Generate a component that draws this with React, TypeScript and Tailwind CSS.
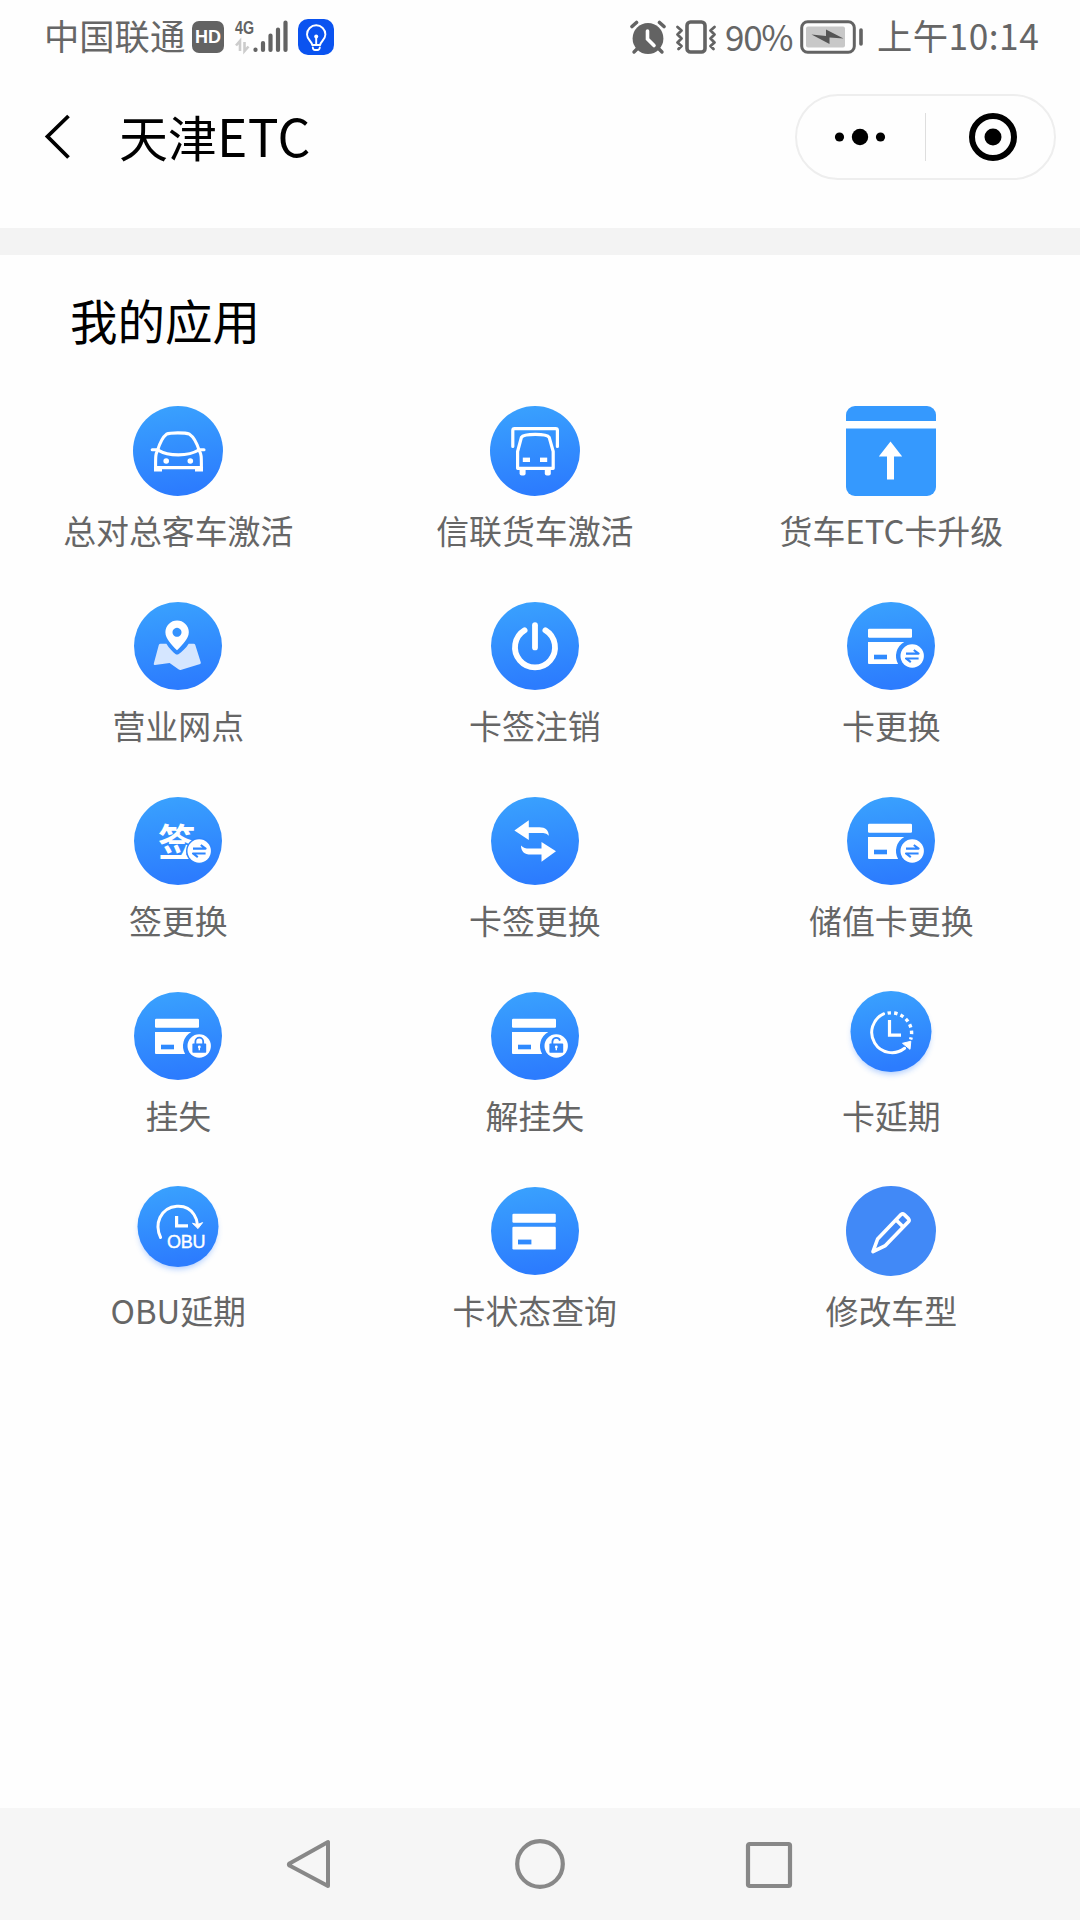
import type { ReactNode } from "react";

const CJK = "font-['Noto_Sans_CJK_SC',sans-serif]";

/* ---------- icon building blocks, all drawn in a 90x90 box ---------- */

const Disc = ({ children, small, r = 44 }: { children: ReactNode; small?: boolean; r?: number }) => (
  <svg viewBox="0 0 90 90" className="w-[90px] h-[90px] overflow-visible" fill="none">
    <defs>
      <linearGradient id="disc" x1="0" y1="0" x2="0.15" y2="1">
        <stop offset="0" stopColor="#3aa3fe" />
        <stop offset="1" stopColor="#2c7cfe" />
      </linearGradient>
      <filter id="glow" x="-20%" y="-20%" width="140%" height="150%">
        <feGaussianBlur stdDeviation="3" />
      </filter>
    </defs>
    {small && <circle cx="45" cy="44.5" r="38.5" fill="#2c7cfe" opacity="0.4" filter="url(#glow)" />}
    {small ? (
      <circle cx="45" cy="40.5" r="40.5" fill="url(#disc)" />
    ) : (
      <circle cx="45" cy="45" r={r} fill="url(#disc)" />
    )}
    {children}
  </svg>
);

const CardShape = () => (
  <>
    <rect x="22" y="27.7" width="44" height="9" rx="1.2" fill="#fff" />
    <path d="M22 41H58.3A16 16 0 0 0 52.1 63H23a1 1 0 0 1-1-1z" fill="#fff" />
    <rect x="28" y="53.7" width="13" height="4.6" fill="#2f8afe" />
  </>
);

const SwapBadge = () => (
  <>
    <circle cx="66.2" cy="55" r="11.7" fill="#fff" />
    <path
      d="M60 52.6H72.6L67.8 49M72.6 57.5H60L64.8 61.1"
      stroke="#2f86fe"
      strokeWidth="2.1"
      strokeLinejoin="round"
    />
  </>
);

const LockBadge = ({ open }: { open?: boolean }) => (
  <>
    <circle cx="66.2" cy="55" r="11.7" fill="#fff" />
    <rect x="59.4" y="52.6" width="13.8" height="9.2" rx="0.8" fill="#2f86fe" />
    <path
      d={open ? "M62.4 53V50.6a3.9 3.9 0 0 1 7.6-1" : "M62.4 53V50.6a3.9 3.9 0 0 1 7.8 0V53"}
      stroke="#2f86fe"
      strokeWidth="1.8"
    />
    <path d="M66.3 55.4v3.8" stroke="#fff" strokeWidth="1.4" />
    <circle cx="66.3" cy="56" r="1.4" fill="#fff" />
  </>
);

/* ---------- app icons ---------- */

const CarIcon = () => (
  <Disc r={45}>
    <g stroke="#fff" strokeWidth="3.1" strokeLinejoin="round" strokeLinecap="round">
      <path d="M24.5 44.5C26.5 38 29 31.5 33.5 28.2C37 26.4 52.5 26.4 56.5 28.2C61.5 31.5 64.2 38 66.2 44.5" />
      <path d="M19.2 43.8H24.5C36 50.6 55 50.6 66.2 43.8H71" />
      <path d="M24.5 44.5C22.4 48.5 22.6 50.5 22.6 63.4M66.2 44.5C68.5 48.5 68.4 50.5 68.4 63.4" />
      <path d="M22.6 61.6H68.4" />
    </g>
    <path d="M21 61h8v4.4h-8zM62 61h8v4.4h-8z" fill="#fff" />
    <circle cx="33.2" cy="55" r="2.8" fill="#fff" />
    <circle cx="57.3" cy="55" r="2.8" fill="#fff" />
  </Disc>
);

const TruckIcon = () => (
  <Disc r={45}>
    <path
      d="M22.8 40.5V24.4q0-1.8 1.8-1.8H65.6q1.8 0 1.8 1.8V40.5"
      stroke="#fff"
      strokeWidth="3.2"
      strokeLinecap="round"
    />
    <path
      d="M27.6 62.3V45.5L31.4 31.4C34 27.4 56.6 27.4 59.2 31.4L63.2 45.5V62.3z"
      stroke="#fff"
      strokeWidth="3.2"
      strokeLinejoin="round"
    />
    <rect x="32.8" y="51.6" width="7.2" height="4.4" fill="#fff" />
    <rect x="50" y="51.6" width="7.2" height="4.4" fill="#fff" />
    <rect x="29.6" y="62" width="6" height="7.4" rx="2" fill="#fff" />
    <rect x="54.8" y="62" width="6" height="7.4" rx="2" fill="#fff" />
  </Disc>
);

const UpgradeIcon = () => (
  <svg viewBox="0 0 90 90" className="w-[90px] h-[90px]">
    <rect width="90" height="90" rx="9" fill="#3599fe" />
    <path d="M0 15H90V22.4H0z" fill="#fff" />
    <path d="M44.5 35.6L56.2 50.4H48V73.4H41V50.4H32.8z" fill="#fff" />
  </svg>
);

const MapIcon = () => (
  <Disc>
    <path
      d="M27.5 42.8H33.4C36 47.5 40 51 42.4 52.9Q44 54 45.8 52.9C48.5 51 53 47.5 55.7 42.8H60.6Q61.9 42.8 62.3 44L67.8 61.6Q68 62.6 67.2 62.9L47.6 69Q46.6 69.2 45.8 68.6L36.6 62L22 64Q20.4 64.1 20.8 62.4L25.8 44Q26.2 42.8 27.5 42.8z"
      fill="#d5e6ff"
    />
    <path
      fillRule="evenodd"
      d="M44 49.2C38.5 43.6 32.4 37.6 32.4 31.2a11.7 11.7 0 0 1 23.4 0C55.8 37.6 49.5 43.6 44 49.2zM44 26.8a4.5 4.5 0 1 0 .01 0z"
      fill="#fff"
    />
  </Disc>
);

const PowerIcon = () => (
  <Disc>
    <path d="M34.6 29.2A20 20 0 1 0 55.4 29.2" stroke="#fff" strokeWidth="5.8" strokeLinecap="round" />
    <path d="M45 24.2V46.4" stroke="#fff" strokeWidth="5.8" strokeLinecap="round" />
  </Disc>
);

const CardSwapIcon = () => (
  <Disc>
    <CardShape />
    <SwapBadge />
  </Disc>
);

const TagSwapIcon = () => (
  <Disc>
    <text x="25" y="60" fontSize="38" fontWeight="700" fill="#fff" fontFamily="'Noto Sans CJK SC', sans-serif">
      签
    </text>
    <circle cx="66.2" cy="55" r="13.2" fill="#2f86fe" />
    <SwapBadge />
  </Disc>
);

const ArrowsIcon = () => (
  <Disc>
    <path
      d="M24.4 34.6L38.8 24.2V31.2H49.5C55.5 31.2 58.8 34.6 58.8 39.8C56.5 37.3 54.5 37 50.5 37H38.8V44z"
      fill="#fff"
    />
    <path
      d="M66 55.3L51.5 65.8V58.6H41C34 58.6 31 55 31 49.4C33.5 52 35.5 52.5 39.5 52.5H51.5V46z"
      fill="#fff"
    />
  </Disc>
);

const CardLockIcon = () => (
  <Disc>
    <CardShape />
    <LockBadge />
  </Disc>
);

const CardUnlockIcon = () => (
  <Disc>
    <CardShape />
    <LockBadge open />
  </Disc>
);

const ClockIcon = () => (
  <Disc small>
    <path d="M37.6 22.9A20.3 20.3 0 1 0 58.6 57.3" stroke="#fff" strokeWidth="3" strokeLinecap="round" />
    <path d="M41.6 22.2A20.3 20.3 0 0 1 64.6 48.5" stroke="#fff" strokeWidth="3.4" strokeDasharray="3.4 3.2" />
    <path d="M56.5 52.3L64.8 50.3L64 58.3z" fill="#fff" stroke="#fff" strokeLinejoin="round" />
    <path d="M43.5 29V44.2H55" stroke="#fff" strokeWidth="3.2" />
  </Disc>
);

const ObuIcon = () => (
  <Disc small>
    <path
      d="M27.6 51.5C24.5 45 24 38 27 31.5C34 17.5 53.5 16.5 61 28.5Q64 33 64.5 39"
      stroke="#fff"
      strokeWidth="3"
      strokeLinecap="round"
    />
    <path d="M59.5 37.3L64.5 38.6L69.6 36.6L65 42.6z" fill="#fff" stroke="#fff" strokeLinejoin="round" />
    <path d="M43.6 30V39.8H55" stroke="#fff" strokeWidth="3.2" />
    <text
      x="34"
      y="62"
      fontSize="18"
      fill="#fff"
      stroke="#fff"
      strokeWidth="0.4"
      textLength="38.5"
      fontFamily="'Liberation Sans', sans-serif"
    >
      OBU
    </text>
  </Disc>
);

const CardStatusIcon = () => (
  <Disc>
    <rect x="22.4" y="27.8" width="43.4" height="9" rx="1.2" fill="#fff" />
    <rect x="22.4" y="40.8" width="43.4" height="22.6" rx="1.2" fill="#fff" />
    <rect x="28" y="53.6" width="13.4" height="4.8" fill="#2f8afe" />
  </Disc>
);

const PencilIcon = () => (
  <svg viewBox="0 0 90 90" className="w-[90px] h-[90px]" fill="none">
    <circle cx="45" cy="45" r="45" fill="#4189f7" />
    <g stroke="#fff" strokeWidth="3.6" strokeLinejoin="round">
      <path d="M27 65.6L31.6 53L55 28.6Q56.6 27.2 58.3 28.6L62.4 32.6Q63.8 34.2 62.4 35.8L39.4 59.6z" />
      <path d="M50.4 34.2L57 40.8" />
    </g>
  </svg>
);

const APPS = [
  { label: "总对总客车激活", icon: CarIcon },
  { label: "信联货车激活", icon: TruckIcon },
  { label: "货车ETC卡升级", icon: UpgradeIcon },
  { label: "营业网点", icon: MapIcon },
  { label: "卡签注销", icon: PowerIcon },
  { label: "卡更换", icon: CardSwapIcon },
  { label: "签更换", icon: TagSwapIcon },
  { label: "卡签更换", icon: ArrowsIcon },
  { label: "储值卡更换", icon: CardSwapIcon },
  { label: "挂失", icon: CardLockIcon },
  { label: "解挂失", icon: CardUnlockIcon },
  { label: "卡延期", icon: ClockIcon },
  { label: "OBU延期", icon: ObuIcon },
  { label: "卡状态查询", icon: CardStatusIcon },
  { label: "修改车型", icon: PencilIcon },
];

/* ---------- page sections ---------- */

const StatusBar = () => (
  <div className="h-[74px] shrink-0 flex items-center pl-[44px] pr-[41px] text-[#666] leading-none">
    <span className="w-[140px] text-[35.3px] whitespace-nowrap -mt-1">中国联通</span>

    <span className="ml-[8px] w-[32px] h-[32px] rounded-[7px] bg-[#636363] text-white text-[18px] font-bold flex items-center justify-center font-['Liberation_Sans',sans-serif]">
      HD
    </span>

    {/* Network type + signal */}
    <svg viewBox="0 0 56 38" className="ml-[10px] w-[56px] h-[38px] overflow-visible" fill="none">
      <text
        x="1"
        y="15.5"
        fontSize="19"
        fontWeight="700"
        fill="#636363"
        textLength="19"
        lengthAdjust="spacingAndGlyphs"
        fontFamily="'Liberation Sans', sans-serif"
      >
        4G
      </text>
      <path d="M6 33V23L2 27.5M10.5 24v9l4-4.5" stroke="#ccc" strokeWidth="2.6" />
      <path
        d="M21.5 31.5v.5M29 25v7M36.5 17.5V32M44 11.5V32M51.5 4.5V32"
        stroke="#636363"
        strokeWidth="4.2"
        strokeLinecap="round"
      />
    </svg>

    <svg viewBox="0 0 36 36" className="ml-[8px] w-[36px] h-[36px]" fill="none">
      <rect width="36" height="36" rx="10" fill="#0a53f0" />
      <g stroke="#fff" strokeWidth="1.9" strokeLinecap="round" strokeLinejoin="round">
        <path d="M14.2 26C14.2 22.5 9 21 9 15.5a9.2 9.2 0 0 1 18.4 0C27.4 21 22.2 22.5 22.2 26z" />
        <path d="M14.8 28.5Q15 31 17 31H19.5Q21.5 31 21.8 28.5M18.2 18v7.5" />
      </g>
      <circle cx="18.2" cy="17.5" r="2" fill="#fff" />
    </svg>

    <div className="flex-1" />

    {/* Alarm */}
    <svg viewBox="0 0 36 36" className="w-[36px] h-[36px]" fill="none">
      <circle cx="18" cy="19.5" r="15.4" fill="#636363" />
      <path d="M2 7.5L6.5 3.5M29.5 3.5L34 7.5" stroke="#636363" strokeWidth="3.6" strokeLinecap="round" />
      <path d="M7 30l-3 3M29 30l3 3" stroke="#636363" strokeWidth="3.4" strokeLinecap="round" />
      <path d="M17.5 12V20L24 26.5" stroke="#fff" strokeWidth="3.6" strokeLinecap="round" />
    </svg>

    {/* Vibrate */}
    <svg
      viewBox="0 0 42 34"
      className="ml-[9px] w-[42px] h-[34px]"
      fill="none"
      stroke="#636363"
      strokeLinejoin="round"
      strokeLinecap="round"
    >
      <rect x="12" y="2" width="18" height="30" rx="3.5" strokeWidth="3.6" />
      <path
        d="M2.5 7l4 3.5-4 4 4 4-4 4 4 3.5-3 3M39.5 7l-4 3.5 4 4-4 4 4 4-4 3.5 3 3"
        strokeWidth="2.8"
      />
    </svg>

    <span className="ml-[8px] w-[69px] text-[35px] tracking-[-1.3px] whitespace-nowrap -mt-1">90%</span>

    {/* Battery */}
    <svg viewBox="0 0 64 34" className="ml-[6px] w-[64px] h-[34px]" fill="none">
      <rect x="1.7" y="1.7" width="52.6" height="30.6" rx="6" stroke="#636363" strokeWidth="3" />
      <rect x="6" y="6.5" width="39" height="21" rx="2" fill="#c8c8c8" />
      <path d="M11.5 14.5L26 16V9.5L43.5 18.5L29.5 17.5V24z" fill="#555" />
      <path d="M61 10v14" stroke="#636363" strokeWidth="3.6" strokeLinecap="round" />
    </svg>

    <span className="ml-[13px] w-[162px] text-[35.3px] tracking-[0.5px] whitespace-nowrap -mt-1">上午10:14</span>
  </div>
);

const TitleBar = () => (
  <div className="h-[154px] shrink-0 flex items-start justify-between pl-[43px] pr-[24px] pt-[20px]">
    <div className="h-[86px] flex items-center">
      <svg viewBox="0 0 28 48" className="w-[28px] h-[48px]" fill="none">
        <path d="M25.5 3L4.5 23.5L25.5 44.5" stroke="#000" strokeWidth="3.8" />
      </svg>
      <h1 className="ml-[48px] text-[49px] leading-none text-black -mt-1">
        天津<span className="text-[51.5px] tracking-[0.4px]">ETC</span>
      </h1>
    </div>

    <div className="w-[261px] h-[86px] rounded-full border-2 border-[#eeeeee] flex items-center">
      <svg viewBox="0 0 128 50" className="w-[128px] h-[50px]">
        <circle cx="42.5" cy="25" r="4.6" />
        <circle cx="63" cy="25" r="8.2" />
        <circle cx="83.5" cy="25" r="4.6" />
      </svg>
      <div className="w-px h-[48px] bg-[#dedede]" />
      <svg viewBox="0 0 128 50" className="w-[128px] h-[50px]">
        <circle cx="67" cy="25" r="21" fill="none" stroke="#000" strokeWidth="6" />
        <circle cx="67" cy="25" r="8.5" />
      </svg>
    </div>
  </div>
);

const NavBar = () => (
  <nav className="h-[112px] shrink-0 bg-[#f6f6f6] flex pl-[286px] pt-[30px]">
    <svg viewBox="0 0 46 52" className="w-[46px] h-[52px]" fill="none">
      <path d="M42 4V48L3.5 27.6Q2.2 26.5 3.5 25.4z" stroke="#888" strokeWidth="4" strokeLinejoin="round" />
    </svg>
    <svg viewBox="0 0 52 52" className="ml-[182px] w-[52px] h-[52px]" fill="none">
      <circle cx="26" cy="26" r="22.8" stroke="#888" strokeWidth="4.2" />
    </svg>
    <svg viewBox="0 0 50 52" className="ml-[178px] w-[50px] h-[52px]" fill="none">
      <rect x="4" y="6" width="42" height="42" rx="1.5" stroke="#888" strokeWidth="4.2" />
    </svg>
  </nav>
);

export default function App() {
  return (
    <div className={`w-[1080px] h-[1920px] bg-[#fefefe] flex flex-col overflow-hidden ${CJK}`}>
      <StatusBar />
      <TitleBar />
      <div className="h-[27px] shrink-0 bg-[#f3f3f3]" />

      <main className="flex-1">
        <h2 className="pl-[70px] pt-[39px] h-[151px] text-[47.5px] leading-[52px] text-black">我的应用</h2>

        <div className="w-[1069.6px] grid grid-cols-3 gap-y-[51px]">
          {APPS.map(({ label, icon: Icon }) => (
            <div key={label} className="h-[144px] flex flex-col items-center">
              <Icon />
              <span className="mt-[14px] text-[32.9px] leading-[40px] text-[#666] whitespace-nowrap">{label}</span>
            </div>
          ))}
        </div>
      </main>

      <NavBar />
    </div>
  );
}
